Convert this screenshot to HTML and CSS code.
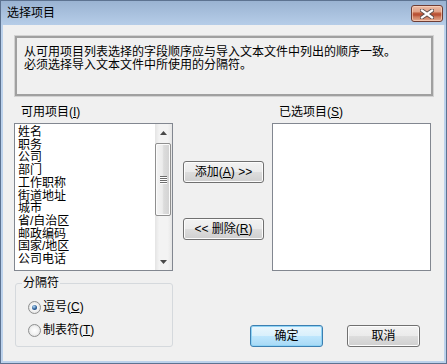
FILE: index.html
```html
<!DOCTYPE html>
<html lang="zh-CN">
<head>
<meta charset="utf-8">
<title>选择项目</title>
<link rel="stylesheet" href="styles.css">
</head>
<body>
<div class="window">
  <div class="titlebar">
    <span class="title">选择项目</span>
    <div class="close">
      <svg width="14" height="10" viewBox="0 0 14 10">
        <path d="M2 1.5 L12 8.5 M12 1.5 L2 8.5" stroke="#5a4a48" stroke-width="4" stroke-linecap="square"/>
        <path d="M2 1.5 L12 8.5 M12 1.5 L2 8.5" stroke="#ffffff" stroke-width="2.2" stroke-linecap="square"/>
      </svg>
    </div>
  </div>
  <div class="client">
    <div class="message">
      <p>从可用项目列表选择的字段顺序应与导入文本文件中列出的顺序一致。</p>
      <p>必须选择导入文本文件中所使用的分隔符。</p>
    </div>
    <div class="lists">
      <div class="col">
        <div class="label">可用项目(<u>I</u>)</div>
        <div class="listbox">
          <ul class="items">
            <li>姓名</li>
            <li>职务</li>
            <li>公司</li>
            <li>部门</li>
            <li>工作职称</li>
            <li>街道地址</li>
            <li>城市</li>
            <li>省/自治区</li>
            <li>邮政编码</li>
            <li>国家/地区</li>
            <li>公司电话</li>
          </ul>
          <div class="scrollbar">
            <div class="arrow"><svg width="7" height="4" viewBox="0 0 7 4"><path d="M3.5 0 L7 4 L0 4 Z" fill="#4a4a4a"/></svg></div>
            <div class="track">
              <div class="thumb">
                <svg width="7" height="8" viewBox="0 0 7 8"><path d="M0 0.5H7M0 2.5H7M0 4.5H7M0 6.5H7" stroke="#6d6d6d" stroke-width="1"/><path d="M0 1.5H7M0 3.5H7M0 5.5H7M0 7.5H7" stroke="#ffffff" stroke-width="1"/></svg>
              </div>
            </div>
            <div class="arrow"><svg width="7" height="4" viewBox="0 0 7 4"><path d="M0 0 L7 0 L3.5 4 Z" fill="#4a4a4a"/></svg></div>
          </div>
        </div>
      </div>
      <div class="mid">
        <button class="btn">添加(<u>A</u>) &gt;&gt;</button>
        <button class="btn">&lt;&lt; 删除(<u>R</u>)</button>
      </div>
      <div class="col">
        <div class="label">已选项目(<u>S</u>)</div>
        <div class="listbox"></div>
      </div>
    </div>
    <div class="bottom">
      <fieldset class="group">
        <legend>分隔符</legend>
        <div class="radio-row first"><span class="radio checked"></span><span>逗号(<u>C</u>)</span></div>
        <div class="radio-row"><span class="radio"></span><span>制表符(<u>T</u>)</span></div>
      </fieldset>
      <div class="actions">
        <button class="btn default">确定</button>
        <button class="btn">取消</button>
      </div>
    </div>
  </div>
</div>
</body>
</html>
```
FILE: styles.css
```css
* { box-sizing: border-box; }
html, body { margin: 0; padding: 0; }
body {
  width: 447px;
  height: 364px;
  overflow: hidden;
  font-family: "Liberation Sans", "Noto Sans CJK SC", sans-serif;
  font-size: 12px;
  color: #000;
  background: #fff;
}
u { text-decoration: underline; text-underline-offset: 1px; }

.window {
  width: 447px;
  height: 364px;
  border: 1px solid #5d7391;
  background: #bcd2ec;
  display: flex;
  flex-direction: column;
}
.titlebar {
  height: 24px;
  flex: none;
  display: flex;
  align-items: flex-start;
  justify-content: space-between;
  padding-left: 6px;
  background: linear-gradient(#9ab3d2, #b6cde8);
}
.title { line-height: 24px; }
.close {
  width: 32px;
  height: 17px;
  margin: 4px 3px 0 0;
  border: 1px solid #6e3d34;
  border-radius: 3px;
  background: linear-gradient(#ecbca6 0%, #e0a086 40%, #c0603f 46%, #b84d33 60%, #cd7a5c 72%, #e3aa90 100%);
  box-shadow: inset 0 0 0 1px rgba(255, 220, 200, 0.6);
  display: flex;
  align-items: center;
  justify-content: center;
}

.client {
  flex: 1;
  margin: 0 2px 2px 2px;
  background: #f0f0f0;
  padding: 10px 0 0 11px;
  display: flex;
  flex-direction: column;
}

.message {
  width: 420px;
  height: 62px;
  flex: none;
  border: 1px solid #d2d2d2;
  box-shadow: inset 0 0 0 2px #a0a0a0;
  padding: 10px 0 0 9px;
  line-height: 12.6px;
}
.message p { margin: 0; }

.lists { display: flex; margin-top: 9px; }
.col { display: flex; flex-direction: column; width: 159px; }
.label { height: 12px; line-height: 12px; padding-left: 7px; margin-bottom: 5px; }
.listbox {
  height: 148px;
  border: 1px solid #828790;
  background: #fff;
  display: flex;
}
.items {
  list-style: none;
  margin: 0;
  padding: 2px 0 0 3px;
  flex: 1;
  line-height: 12.7px;
  overflow: hidden;
}
.scrollbar {
  width: 17px;
  flex: none;
  display: flex;
  flex-direction: column;
  background: linear-gradient(90deg, #e4e4e4, #f3f3f3 25%, #f3f3f3 75%, #e6e6e6);
}
.arrow { height: 17px; display: flex; align-items: center; justify-content: center; }
.arrow svg { display: block; }
.track { flex: 1; padding: 2px 1px 0 0; }
.thumb {
  height: 73px;
  border: 1px solid #8f8f8f;
  border-radius: 2px;
  background: linear-gradient(90deg, #f4f4f4 0%, #ececec 45%, #dcdcdc 55%, #d2d2d2 100%);
  box-shadow: inset 0 0 0 1px #fbfbfb;
  display: flex;
  align-items: center;
  justify-content: center;
}
.thumb svg { display: block; }

.mid {
  width: 81px;
  margin: 0 8px 0 10px;
  padding-top: 55px;
  display: flex;
  flex-direction: column;
  gap: 35px;
}

.btn {
  font: inherit;
  color: #000;
  height: 22px;
  padding: 0;
  border: 1px solid #707070;
  border-radius: 3px;
  background: linear-gradient(#f2f2f2 0%, #ebebeb 48%, #dddddd 52%, #cfcfcf 100%);
  box-shadow: inset 0 0 0 1px #fcfcfc;
  line-height: 20px;
  text-align: center;
}
.btn.default {
  border-color: #3c7fb1;
  background: linear-gradient(#eaf6fd 0%, #d9f0fc 48%, #bee6fd 52%, #a7d9f5 100%);
  box-shadow: inset 0 0 0 1px #8fd3f5;
}

.bottom { display: flex; align-items: flex-end; margin-top: 6px; }
.group {
  width: 158px;
  margin: 0 0 0 1px;
  border: 1px solid #d5d9dd;
  border-radius: 3px;
  padding: 0 0 9px 6px;
  min-width: 0;
}
.group legend { padding: 0 1px; line-height: 12px; }
.radio-row {
  display: flex;
  align-items: center;
  gap: 2px;
  height: 13px;
  line-height: 13px;
  margin: 10px 0 0 6px;
}
.radio-row.first { margin-top: 12px; }
.radio {
  width: 13px;
  height: 13px;
  border-radius: 50%;
  border: 1px solid #8e8f8f;
  background: radial-gradient(circle at 50% 50%, #ffffff 0%, #f4f4f4 45%, #d6d6d6 100%);
  display: flex;
  align-items: center;
  justify-content: center;
}
.radio.checked::after {
  content: "";
  width: 5px;
  height: 5px;
  border-radius: 50%;
  background: radial-gradient(circle at 40% 35%, #b6dcf6 0%, #2a5d98 55%, #163c6c 100%);
}

.actions { display: flex; gap: 24px; margin-left: 77px; }
.actions .btn { width: 73px; }
```
